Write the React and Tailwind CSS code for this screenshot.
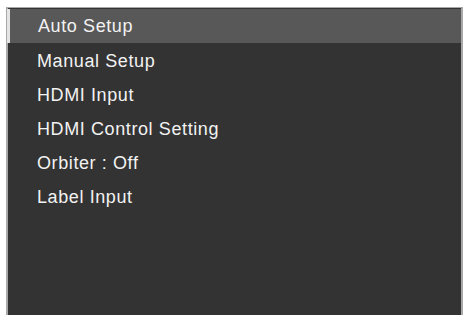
const items = [
  "Auto Setup",
  "Manual Setup",
  "HDMI Input",
  "HDMI Control Setting",
  "Orbiter : Off",
  "Label Input",
];

export default function App() {
  return (
    <div className="h-[315px] w-[465px] bg-white pl-[6px] pr-[2px] pt-[7px] font-['Liberation_Sans',Arial,sans-serif]">
      <div className="flex h-full flex-col border-x-2 border-t border-[#a8a8a8] bg-[#333333] pt-px">
        <div className="-ml-px flex h-[34px] items-center border-l-[3px] border-[#e4e4e4] bg-[#585858] pl-[28px] text-[18px] tracking-[0.6px] text-[#f2f2f2]">
          {items[0]}
        </div>
        <div className="flex flex-col pt-[1px]">
          {items.slice(1).map((label) => (
            <div
              key={label}
              className="flex h-[34px] items-center pl-[29px] text-[18px] tracking-[0.6px] text-[#f2f2f2]"
            >
              {label}
            </div>
          ))}
        </div>
      </div>
    </div>
  );
}
